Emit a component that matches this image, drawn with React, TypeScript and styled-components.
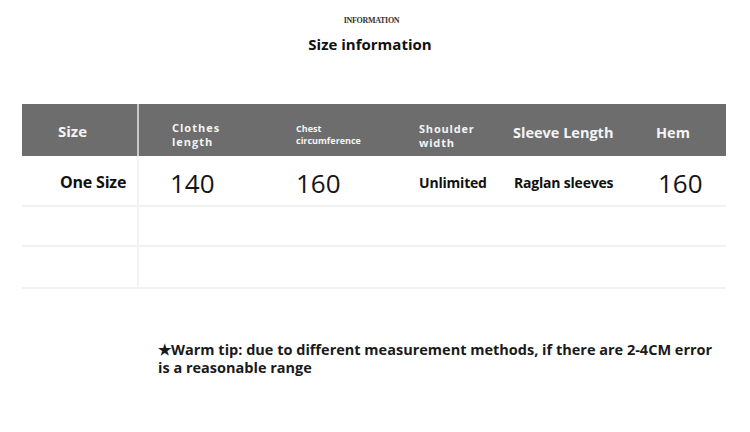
import styled, { createGlobalStyle } from 'styled-components';

const GlobalStyle = createGlobalStyle`
  html, body {
    margin: 0;
    padding: 0;
    background: #ffffff;
  }
  body {
    font-family: 'Open Sans', 'Noto Sans', sans-serif;
    color: #111111;
  }
`;

const Page = styled.div`
  width: 750px;
  height: 432px;
  overflow: hidden;
  display: flex;
  flex-direction: column;
  align-items: center;
`;

const Kicker = styled.div`
  margin-top: 16px;
  margin-right: 7px;
  font-family: 'Liberation Serif', serif;
  font-size: 8px;
  font-weight: 700;
  letter-spacing: -0.3px;
  color: #333333;
`;

const Title = styled.h1`
  margin: 9px 10px 0 0;
  font-size: 15px;
  font-weight: 700;
  color: #111111;
  line-height: 20px;
`;

const Table = styled.div`
  align-self: flex-start;
  margin: 50px 0 0 22px;
  width: 704px;
  display: grid;
  grid-template-columns: 117px 157px 123px 94px 143px 1fr;
  grid-template-rows: 52px 51px 40px 42px;
`;

const HeadCell = styled.div<{ $pad: number; $drop: number; $first?: boolean }>`
  background: #6d6d6d;
  color: #f4f4f4;
  display: flex;
  flex-direction: column;
  justify-content: center;
  padding-left: ${(p) => p.$pad}px;
  padding-top: ${(p) => p.$drop}px;
  border-right: ${(p) => (p.$first ? '2px solid #c9c9c9' : 'none')};
  font-weight: 700;
`;

const HeadText = styled.span<{ $size: number; $spacing?: number }>`
  font-size: ${(p) => p.$size}px;
  letter-spacing: ${(p) => p.$spacing ?? 0}px;
  line-height: ${(p) => Math.round(p.$size * 1.3)}px;
`;

const BodyCell = styled.div<{ $pad: number; $first?: boolean }>`
  display: flex;
  align-items: center;
  padding-left: ${(p) => p.$pad}px;
  padding-top: 3px;
  border-bottom: 2px solid #f1f1f1;
  border-right: ${(p) => (p.$first ? '2px solid #f3f3f3' : 'none')};
`;

const StrongText = styled.span<{ $size: number }>`
  font-size: ${(p) => p.$size}px;
  font-weight: 700;
  color: #111111;
  letter-spacing: -0.2px;
`;

const Number = styled.span`
  font-size: 26px;
  font-weight: 400;
  color: #151515;
  margin-top: 2px;
`;

const Tip = styled.p`
  align-self: flex-start;
  margin: 52px 0 0 158px;
  width: 560px;
  font-size: 14.5px;
  font-weight: 700;
  line-height: 18px;
  color: #1a1a1a;
`;

const pads = [36, 33, 0, 0, 0, 0];

export default function App() {
  const emptyRow = (key: string) =>
    pads.map((pad, i) => <BodyCell key={`${key}-${i}`} $pad={pad} $first={i === 0} />);

  return (
    <>
      <GlobalStyle />
      <Page>
        <Kicker>INFORMATION</Kicker>
        <Title>Size information</Title>
        <Table>
          <HeadCell $pad={36} $drop={2} $first>
            <HeadText $size={15}>Size</HeadText>
          </HeadCell>
          <HeadCell $pad={33} $drop={10}>
            <HeadText $size={11} $spacing={1}>Clothes</HeadText>
            <HeadText $size={11} $spacing={1}>length</HeadText>
          </HeadCell>
          <HeadCell $pad={0} $drop={10}>
            <HeadText $size={9}>Chest</HeadText>
            <HeadText $size={9}>circumference</HeadText>
          </HeadCell>
          <HeadCell $pad={0} $drop={11}>
            <HeadText $size={11} $spacing={0.8}>Shoulder</HeadText>
            <HeadText $size={11} $spacing={0.8}>width</HeadText>
          </HeadCell>
          <HeadCell $pad={0} $drop={5}>
            <HeadText $size={14.5}>Sleeve Length</HeadText>
          </HeadCell>
          <HeadCell $pad={0} $drop={5}>
            <HeadText $size={14.5}>Hem</HeadText>
          </HeadCell>

          <BodyCell $pad={38} $first>
            <StrongText $size={16}>One Size</StrongText>
          </BodyCell>
          <BodyCell $pad={31}>
            <Number>140</Number>
          </BodyCell>
          <BodyCell $pad={0}>
            <Number>160</Number>
          </BodyCell>
          <BodyCell $pad={0}>
            <StrongText $size={14}>Unlimited</StrongText>
          </BodyCell>
          <BodyCell $pad={1}>
            <StrongText $size={14}>Raglan sleeves</StrongText>
          </BodyCell>
          <BodyCell $pad={2}>
            <Number>160</Number>
          </BodyCell>

          {emptyRow('r2')}
          {emptyRow('r3')}
        </Table>
        <Tip>
          ★Warm tip: due to different measurement methods, if there are 2-4CM error is a
          reasonable range
        </Tip>
      </Page>
    </>
  );
}
